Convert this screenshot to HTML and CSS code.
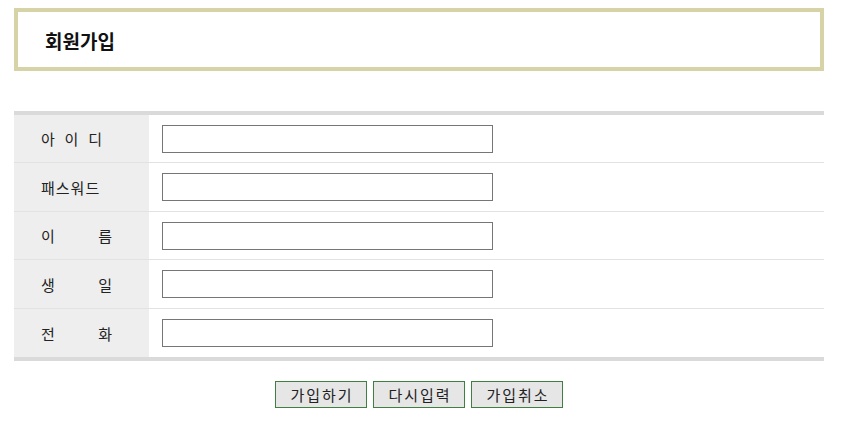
FILE: index.html
```html
<!DOCTYPE html>
<html lang="ko">
<head>
<meta charset="utf-8">
<title>회원가입</title>
<link rel="stylesheet" href="styles.css">
</head>
<body>
<div class="wrap">
  <div class="title-box"><h1 class="title">회원가입</h1></div>
  <form class="form">
    <div class="rows">
      <div class="row">
        <div class="label"><span class="spread spread-3"><span>아</span><span>이</span><span>디</span></span></div>
        <div class="field"><input class="text" type="text"></div>
      </div>
      <div class="row">
        <div class="label"><span class="plain">패스워드</span></div>
        <div class="field"><input class="text" type="password"></div>
      </div>
      <div class="row">
        <div class="label"><span class="spread spread-2"><span>이</span><span>름</span></span></div>
        <div class="field"><input class="text" type="text"></div>
      </div>
      <div class="row">
        <div class="label"><span class="spread spread-2"><span>생</span><span>일</span></span></div>
        <div class="field"><input class="text" type="text"></div>
      </div>
      <div class="row">
        <div class="label"><span class="spread spread-2"><span>전</span><span>화</span></span></div>
        <div class="field"><input class="text" type="text"></div>
      </div>
    </div>
    <div class="buttons">
      <button class="btn" type="button">가입하기</button>
      <button class="btn" type="reset">다시입력</button>
      <button class="btn" type="button">가입취소</button>
    </div>
  </form>
</div>
</body>
</html>
```
FILE: styles.css
```css
html, body {
  margin: 0;
  padding: 0;
  background: #fff;
}
body {
  font-family: "Noto Sans CJK KR", "Noto Sans", sans-serif;
  color: #222;
}
.wrap {
  width: 810px;
  margin: 8px 0 0 14px;
}
.title-box {
  box-sizing: border-box;
  height: 63px;
  border: 4px solid #d6d3a7;
  display: flex;
  align-items: center;
  padding-left: 27px;
}
.title {
  margin: 0;
  font-size: 19px;
  font-weight: bold;
  color: #111;
  line-height: 1;
  padding-top: 1px;
}
.form {
  margin: 40px 0 0;
}
.rows {
  border-top: 4px solid #dadada;
  border-bottom: 4px solid #dadada;
}
.row {
  display: flex;
  border-bottom: 1px solid #e2e2e2;
}
.row:last-child {
  border-bottom: none;
}
.label {
  width: 135px;
  flex: none;
  background: #eeeeee;
  display: flex;
  align-items: center;
  padding-left: 27px;
  box-sizing: border-box;
  font-size: 15px;
  color: #222;
}
.plain {
  letter-spacing: 1px;
}
.spread {
  display: flex;
  justify-content: space-between;
}
.spread-3 {
  width: 61px;
}
.spread-2 {
  width: 71px;
}
.field {
  flex: 1;
  padding: 10px 0 9px 13px;
}
.row:nth-child(even) .field,
.row:last-child .field {
  padding-bottom: 10px;
}
.text {
  display: block;
  box-sizing: border-box;
  width: 331px;
  height: 28px;
  margin: 0;
  border: 1px solid #767676;
  background: #fff;
  padding: 0 4px;
  font-size: 14px;
}
.buttons {
  display: flex;
  justify-content: center;
  gap: 6px;
  margin-top: 20px;
}
.btn {
  box-sizing: border-box;
  width: 92px;
  height: 27px;
  padding: 0 0 0 2px;
  margin: 0;
  border: 1px solid #3f7f3f;
  background: #e6e6e6;
  font-family: "Noto Sans CJK KR", "Noto Sans", sans-serif;
  font-size: 15px;
  letter-spacing: 2px;
  color: #222;
  line-height: 1;
}
```
